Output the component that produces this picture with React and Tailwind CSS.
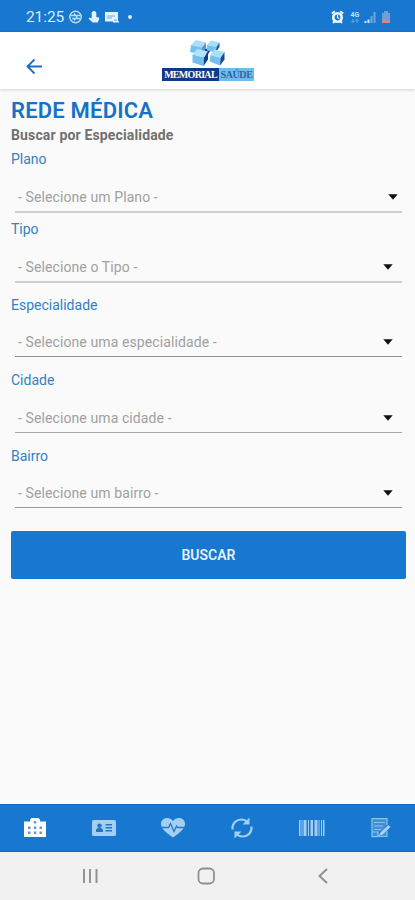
const fields = [
  { label: 'Plano', value: '- Selecione um Plano -', row: 'h-[70px]', body: 'mt-[18px] h-[24px]', line: 'h-[2px] bg-[#cfcfcf]', caret: 'mr-[4px]' },
  { label: 'Tipo', value: '- Selecione o Tipo -', row: 'h-[76px]', body: 'mt-[18px] h-[24px]', line: 'h-[2px] bg-[#cfcfcf]', caret: 'mr-[9px]' },
  { label: 'Especialidade', value: '- Selecione uma especialidade -', row: 'h-[75px]', body: 'mt-[17px] h-[24px]', line: 'h-px bg-[#8f8f8f]', caret: 'mr-[9px]' },
  { label: 'Cidade', value: '- Selecione uma cidade -', row: 'h-[76px]', body: 'mt-[18px] h-[24px]', line: 'h-px bg-[#a6a6a6]', caret: 'mr-[9px]' },
  { label: 'Bairro', value: '- Selecione um bairro -', row: 'h-[85px]', body: 'mt-[17px] h-[24px]', line: 'h-px bg-[#9a9a9a]', caret: 'mr-[9px]' },
];

function StatusBar() {
  return (
    <div className="flex h-8 shrink-0 items-center bg-[#1877ce] pl-[26px] pr-[24px] text-[#d9ecfb]">
      <span className="mt-[2px] w-[42px] text-[15.5px] leading-5 tracking-[-0.1px]">21:25</span>
      <svg className="mt-px" width="66" height="16" viewBox="0 0 66 16" fill="none">
        <circle cx="7.500" cy="8" r="5.700" stroke="#b9dcf7" strokeWidth="1.500" />
        <path d="M3 6.500h9M4 9.500h8M6 4.500l3 3.500-3 3.500" stroke="#b9dcf7" strokeWidth="1.400" />
        <path d="M26 2c1.500 0 2.300 1 2.300 2.200V8l2.500.6c.7.3.6 1 .3 1.800L29.700 13.500h-5L20.800 10c-.3-.9.4-1.600 1.200-1.300l1.700.6V4.200C23.700 3 24.500 2 26 2z" fill="#e0f1fe" />
        <path d="M37 3h13v8.500l1.500 2H45v-1h-8z" fill="#e4f3ff" />
        <path d="M39 7h8M39 9h5M46 11h3" stroke="#68a6e0" strokeWidth="1.200" />
        <circle cx="62" cy="8" r="1.900" fill="#e4f3ff" />
      </svg>
      <svg className="ml-auto mt-px" width="60" height="16" viewBox="0 0 60 16" fill="none">
        <circle cx="6.500" cy="8.500" r="4.200" stroke="#f2faff" strokeWidth="2.600" />
        <path d="M.8 4.500l3-2.300M12.200 4.500l-3-2.300M2 14l2-2M11 14l-2-2" stroke="#f2faff" strokeWidth="2" />
        <path d="M6.500 6v2.700l1.800.8" stroke="#f2faff" strokeWidth="1.200" />
        <text x="19.500" y="8" fontSize="7" fontWeight="700" fill="#c3e1f8">4G</text>
        <path d="M22 10v3M20.500 12l1.500 1.500L23.500 12M26 14v-3.500M24.500 12l1.500-1.500 1.500 1.500" stroke="#6eafe6" />
        <path d="M34.500 12v2M37.500 10.500V14" stroke="#d3eafb" strokeWidth="2" />
        <path d="M40.500 7v7M43.500 3v11" stroke="#68a9e1" strokeWidth="2" />
        <path d="M51 4h2V2h4v2h2v9h-8z" fill="#6f9fd0" />
        <path d="M51 11.500h8V14h-8z" fill="#ed8374" />
      </svg>
    </div>
  );
}

function Logo() {
  return (
    <div className="flex w-[92px] flex-col items-center">
      <svg className="mr-[3px]" width="40" height="30" viewBox="0 0 40 30">
        <path d="M17 11l8-1-5 8z" fill="#123f8c" />
        <path d="M9 2l10 2.500-4 5-11-2.500z" fill="#a9def9" />
        <path d="M4 7l11 2.500-.5 7L3 14z" fill="#74c1ef" />
        <path d="M19 4.500V10l-4.500 6.500.5-7z" fill="#4799d5" />
        <path d="M24 2.500l8.500 2-3 4.500-9.500-2z" fill="#a5ddf9" />
        <path d="M20 7l9.500 2-1 5.500-8.500-2z" fill="#73c0ed" />
        <path d="M32.500 4.500V9l-4 5.500 1-5.500z" fill="#1a5aa5" />
        <path d="M10 11l11 2.500-4 6L5.500 16.500z" fill="#b4e2fa" />
        <path d="M5.500 16.500l11.500 3-.5 8.500L5.500 24.500z" fill="#72bfed" />
        <path d="M21 13.500v8l-4.500 6.500.5-8.500z" fill="#123f8c" />
        <path d="M27 11.500l10.500 2.500-4 6-10-3z" fill="#aadff9" />
        <path d="M23.500 17l10 3-.5 7.500-10.500-4z" fill="#75c1ee" />
        <path d="M37.500 14v7.500l-4.500 6 .5-7.500z" fill="#164a98" />
      </svg>
      <div className="flex h-[13px] w-full font-['Liberation_Serif',serif] text-[10px] leading-[13px]">
        <span className="flex w-[57px] justify-center bg-[#123987] font-bold tracking-[-0.7px] text-white">MEMORIAL</span>
        <span className="flex w-[35px] justify-center bg-[#72bcec] font-bold tracking-[-0.4px] text-[#2a66a6]">SAÚDE</span>
      </div>
    </div>
  );
}

function Header() {
  return (
    <header className="flex h-[57px] shrink-0 bg-white shadow-[0_1px_3px_rgba(0,0,0,0.16)]">
      <svg className="ml-[26px] mt-[25px]" width="17" height="18" viewBox="0 0 17 18" fill="none" stroke="#1d70bd" strokeWidth="1.800">
        <path d="M16 9.500H1.800M8.500 2.500L1.500 9.500l7 7" />
      </svg>
      <div className="ml-[119px] mt-[6px]"><Logo /></div>
    </header>
  );
}

function Field({ label, value, row, body, line, caret }) {
  return (
    <div className={`flex flex-col ${row}`}>
      <label className="h-5 pl-[11px] text-[14px] leading-5 text-[#3181c4]">{label}</label>
      <div className={`ml-[15px] mr-[13px] flex items-start justify-between pl-[3px] ${body}`}>
        <span className="whitespace-pre text-[14px] leading-5 tracking-[0.1px] text-[#a0a0a0]">{value}</span>
        <svg className={`mt-[7px] ${caret}`} width="10" height="6" viewBox="0 0 10 6"><path d="M.3.3h9.400L5 5.700z" fill="#111" /></svg>
      </div>
      <div className={`ml-[15px] mr-[13px] shrink-0 ${line}`} />
    </div>
  );
}

function TabBar() {
  return (
    <nav className="flex h-12 shrink-0 items-center justify-between border-y border-[#1269be] bg-[#1877ce] pl-[23px] pr-[23px] text-[#a3cff3]">
      <svg width="24" height="22" viewBox="0 0 24 22">
        <path d="M1 4.500h6V2.500L8.500 1h7L17 2.500v2h6V20H1z" fill="#fff" />
        <path d="M10.800 4h2.500v2.500h-2.500zM5 9.500h2.500V12H5zM10.800 9.500h2.500V12h-2.500zM16.500 9.500H19V12h-2.500zM5 14.500h2.500V17H5zM10.800 14.500h2.500V17h-2.500zM16.500 14.500H19V17h-2.500z" fill="#5a9bd8" />
      </svg>
      <svg width="24" height="22" viewBox="0 0 24 22">
        <rect y="3" width="24" height="16" rx="1.500" fill="currentColor" />
        <circle cx="7.500" cy="8.700" r="2.300" fill="#2378c5" />
        <path d="M4 15v-1.500c0-1.500 1-2.500 2.500-2.500h2c1.500 0 2.500 1 2.500 2.500V15zM13.500 7H20v1.500h-6.500zM13.500 10H20v1.500h-6.500zM13.500 13H20v1.500h-6.500z" fill="#2378c5" />
      </svg>
      <svg width="24" height="22" viewBox="0 0 24 22">
        <path d="M12 20.500C9 18 0 13 0 7c0-3.500 2.500-6 6-6 2.500 0 4.500 1 6 3 1.500-2 3.500-3 6-3 3.500 0 6 2.500 6 6 0 6-9 11-12 13.500z" fill="currentColor" />
        <path d="M0 10.500h7.500l2-4 3.500 8 2.500-5.500 1 1.500H24" fill="none" stroke="#2879c0" strokeWidth="1.300" />
      </svg>
      <svg width="24" height="22" viewBox="0 0 24 22" fill="none" stroke="currentColor" strokeWidth="2.200">
        <path d="M2.500 12.500C2 6 6.500 2.500 11.500 2.500c3 0 4.500 1 6 2.500M21.500 9.500c.5 6.500-4 10-9 10-3 0-4.500-1-6-2.500" />
        <path d="M19.500.5v7h-7zM4.500 21.500v-7h7z" fill="currentColor" stroke="none" />
      </svg>
      <svg width="26" height="22" viewBox="0 0 26 22" fill="currentColor">
        <path d="M0 3h1.500v16H0zM2.500 3h1v16h-1zM4.500 3h3v16h-3zM9 3h1v16H9zM11.500 3H14v16h-2.500zM15.500 3h3v16h-3zM19.500 3h1v16h-1zM22 3h1v16h-1zM24 3h1.500v16H24z" />
      </svg>
      <svg width="22" height="22" viewBox="0 0 22 22" fill="none" stroke="#8bc1ee">
        <path d="M17 8V1.700H2v18h6l4-4M17 14v5.500H8V15H2" fill="#3f8fd8" strokeWidth="1.200" />
        <path d="M4 5.500h11M4 9h9M4 12.500h7" strokeWidth="1" />
        <path d="M10.500 17.500L19.500 9" stroke="#a9d4f7" strokeWidth="3" />
      </svg>
    </nav>
  );
}

function SystemNav() {
  return (
    <div className="flex h-12 shrink-0 items-center bg-[#f1f1f1] pl-[82px]">
      <svg width="16" height="16" viewBox="0 0 16 16" fill="none" stroke="#8f8f8f" strokeWidth="1.900"><path d="M2 1v14M8 1v14M14.500 1v14" /></svg>
      <svg className="ml-[99px]" width="18" height="18" viewBox="0 0 18 18" fill="none" stroke="#8f8f8f" strokeWidth="1.800"><rect x="1.500" y="1.500" width="15.500" height="15" rx="4.500" /></svg>
      <svg className="ml-[103px]" width="10" height="16" viewBox="0 0 10 16" fill="none" stroke="#8f8f8f" strokeWidth="1.900"><path d="M9 1L1.500 8 9 15" /></svg>
    </div>
  );
}

export default function App() {
  return (
    <div className="flex h-[900px] w-[415px] flex-col overflow-hidden bg-[#fafafa] font-[Roboto,sans-serif]">
      <StatusBar />
      <Header />
      <main className="flex flex-1 flex-col pt-[8px]">
        <h1 className="h-[28px] pl-[11px] text-[22px] font-semibold leading-[28px] tracking-[0.2px] text-[#1772c5]">REDE MÉDICA</h1>
        <h2 className="mb-[4px] h-5 pl-[11px] text-[14px] font-bold leading-5 tracking-[0.15px] text-[#707070]">Buscar por Especialidade</h2>
        {fields.map((f) => <Field key={f.label} {...f} />)}
        <button className="ml-[11px] mr-[9px] h-12 shrink-0 rounded-[2px] bg-[#1877ce] text-[14px] font-semibold text-[#e3f2fe]">BUSCAR</button>
      </main>
      <TabBar />
      <SystemNav />
    </div>
  );
}
